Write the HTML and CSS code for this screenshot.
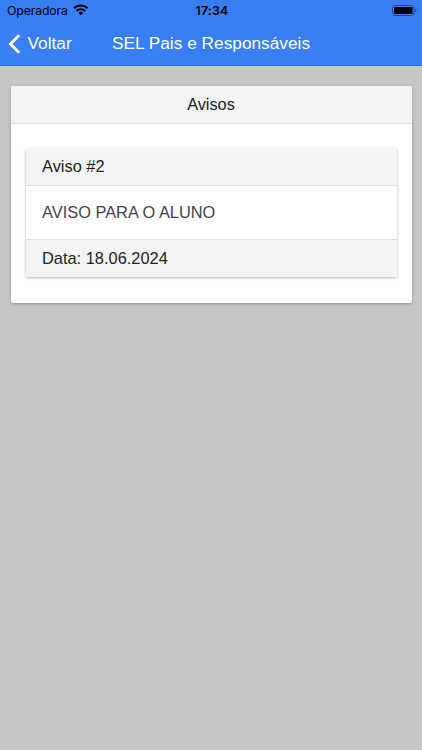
FILE: index.html
```html
<!DOCTYPE html>
<html lang="pt">
<head>
<meta charset="utf-8">
<title>SEL Pais e Responsáveis</title>
<link rel="stylesheet" href="styles.css">
</head>
<body>
<header class="top">
  <div class="status">
    <div class="carrier"><span class="carrier-name">Operadora</span>
      <svg class="wifi" viewBox="0 0 16 12" width="15.500" height="11.600"><g fill="none" stroke="#000" stroke-width="2.1"><path d="M1 4.4a10 10 0 0 1 14 0"/><path d="M3.5 7.2a6.4 6.4 0 0 1 9 0"/></g><path d="M8 11.7 5.5 9.2a3.6 3.6 0 0 1 5 0z"/></svg>
    </div>
    <span class="clock">17:34</span>
    <svg class="battery" viewBox="0 0 25 11" width="25" height="11"><rect x=".5" y=".5" width="21.500" height="10" rx="2.800" fill="none" stroke="#000" stroke-opacity=".45"/><rect x="2" y="2" width="18.500" height="7" rx="1.300"/><path d="M23.300 3.700c1.600.6 1.600 3 0 3.600z" fill-opacity=".5"/></svg>
  </div>
  <nav class="bar">
    <a class="back"><svg viewBox="0 0 13 20" width="13" height="20"><path d="M11.200 1.200 2.400 10l8.800 8.800" fill="none" stroke="#fff" stroke-width="3"/></svg><span>Voltar</span></a>
    <h1 class="title">SEL Pais e Responsáveis</h1>
  </nav>
</header>
<main class="content">
  <section class="card">
    <h2 class="card-header">Avisos</h2>
    <div class="card-body">
      <article class="notice">
        <div class="notice-header">Aviso #2</div>
        <div class="notice-body">AVISO PARA O ALUNO</div>
        <div class="notice-footer">Data: 18.06.2024</div>
      </article>
    </div>
  </section>
</main>
</body>
</html>
```
FILE: styles.css
```css
* { box-sizing: border-box; }
body { margin: 0; min-height: 750px; background: #c6c6c6; color: #222; font: 16.4px/21px "Liberation Sans", Arial, sans-serif; }
.top { height: 66px; background: #387ef5; border-bottom: 1px solid #3574df; }
.status { height: 22px; padding: 0 5px 1px 7px; display: grid; grid-template-columns: 1fr auto 1fr; align-items: center; color: #000; font: 12.3px/21px Inter, sans-serif; }
.carrier { display: flex; align-items: center; gap: 5px; letter-spacing: -.012em; }
.wifi { margin-top: -1px; }
.clock { font-weight: 600; letter-spacing: .02em; }
.battery { justify-self: end; }
.bar { height: 43px; display: grid; grid-template-columns: 1fr auto 1fr; align-items: center; color: #fff; font-size: 17.3px; }
.back { display: flex; align-items: center; gap: 6.5px; padding-left: 8px; }
.title { margin: 0; font-size: 17.3px; font-weight: 400; }
.content { padding: 20px 10.5px; }
.card, .notice { background: #fff; border-radius: 2px; box-shadow: 0 1px 3px rgba(0,0,0,.3); }
.card { height: 216.5px; }
.card-header { margin: 0; height: 38px; padding-top: 8px; background: #f4f4f4; border-bottom: 1px solid #e0e0e0; border-radius: 2px 2px 0 0; font-size: 16.3px; font-weight: 400; text-align: center; }
.card-body { padding: 24px 15px; }
.notice-header, .notice-footer { height: 38px; padding: 8px 16.5px; background: #f4f4f4; }
.notice-header { border-bottom: 1px solid #e0e0e0; }
.notice-body { height: 53px; padding: 16px 16.5px; color: #444; }
.notice-footer { height: 37.5px; border-top: 1px solid #e0e0e0; }
```
